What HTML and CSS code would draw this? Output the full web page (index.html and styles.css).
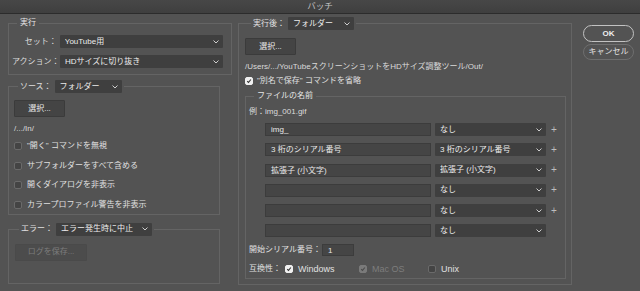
FILE: index.html
```html
<!DOCTYPE html>
<html lang="ja">
<head>
<meta charset="utf-8">
<title>バッチ</title>
<link rel="stylesheet" href="styles.css">
</head>
<body>
<div class="titlebar">バッチ</div>
<div class="main">
  <div class="left">
    <fieldset class="grp g-run">
      <legend class="lg-text">実行</legend>
      <div class="frow">
        <span class="flabel">セット：</span>
        <div class="select s-set"><span>YouTube用</span><svg class="chev" viewBox="0 0 6 4"><path d="M0.5 0.5 L3 3 L5.5 0.5"/></svg></div>
      </div>
      <div class="frow">
        <span class="flabel">アクション：</span>
        <div class="select s-set"><span>HDサイズに切り抜き</span><svg class="chev" viewBox="0 0 6 4"><path d="M0.5 0.5 L3 3 L5.5 0.5"/></svg></div>
      </div>
    </fieldset>

    <fieldset class="grp g-src">
      <legend class="lg-sel"><span class="lg-label">ソース：</span><div class="select s-src"><span>フォルダー</span><svg class="chev" viewBox="0 0 6 4"><path d="M0.5 0.5 L3 3 L5.5 0.5"/></svg></div></legend>
      <div class="btn b-sel">選択...</div>
      <div class="path">/.../In/</div>
      <div class="checks">
        <div class="chk"><span class="box"></span><span>"開く" コマンドを無視</span></div>
        <div class="chk"><span class="box"></span><span>サブフォルダーをすべて含める</span></div>
        <div class="chk"><span class="box"></span><span>開くダイアログを非表示</span></div>
        <div class="chk"><span class="box"></span><span>カラープロファイル警告を非表示</span></div>
      </div>
    </fieldset>

    <fieldset class="grp g-err">
      <legend class="lg-sel"><span class="lg-label">エラー：</span><div class="select s-err"><span>エラー発生時に中止</span><svg class="chev" viewBox="0 0 6 4"><path d="M0.5 0.5 L3 3 L5.5 0.5"/></svg></div></legend>
      <div class="btn b-log disabled">ログを保存...</div>
    </fieldset>
  </div>

  <fieldset class="grp g-dest">
    <legend class="lg-sel"><span class="lg-label">実行後：</span><div class="select s-dest"><span>フォルダー</span><svg class="chev" viewBox="0 0 6 4"><path d="M0.5 0.5 L3 3 L5.5 0.5"/></svg></div></legend>
    <div class="btn b-sel2">選択...</div>
    <div class="path p-out">/Users/.../YouTubeスクリーンショットをHDサイズ調整ツール/Out/</div>
    <div class="chk c-save"><span class="box on"><svg viewBox="0 0 8 8"><path d="M1.6 4.2 L3.3 5.9 L6.5 2"/></svg></span><span>"別名で保存" コマンドを省略</span></div>

    <fieldset class="grp g-name">
      <legend class="lg-text">ファイルの名前</legend>
      <div class="example">例：img_001.gif</div>
      <div class="rows">
        <div class="nrow"><div class="input">img_</div><div class="select s-part"><span>なし</span><svg class="chev" viewBox="0 0 6 4"><path d="M0.5 0.5 L3 3 L5.5 0.5"/></svg></div><span class="plus">+</span></div>
        <div class="nrow"><div class="input">3 桁のシリアル番号</div><div class="select s-part"><span>3 桁のシリアル番号</span><svg class="chev" viewBox="0 0 6 4"><path d="M0.5 0.5 L3 3 L5.5 0.5"/></svg></div><span class="plus">+</span></div>
        <div class="nrow"><div class="input">拡張子 (小文字)</div><div class="select s-part"><span>拡張子 (小文字)</span><svg class="chev" viewBox="0 0 6 4"><path d="M0.5 0.5 L3 3 L5.5 0.5"/></svg></div><span class="plus">+</span></div>
        <div class="nrow"><div class="input"></div><div class="select s-part"><span>なし</span><svg class="chev" viewBox="0 0 6 4"><path d="M0.5 0.5 L3 3 L5.5 0.5"/></svg></div><span class="plus">+</span></div>
        <div class="nrow"><div class="input"></div><div class="select s-part"><span>なし</span><svg class="chev" viewBox="0 0 6 4"><path d="M0.5 0.5 L3 3 L5.5 0.5"/></svg></div><span class="plus">+</span></div>
        <div class="nrow"><div class="input"></div><div class="select s-part"><span>なし</span><svg class="chev" viewBox="0 0 6 4"><path d="M0.5 0.5 L3 3 L5.5 0.5"/></svg></div></div>
      </div>
      <div class="serial"><span>開始シリアル番号：</span><div class="input i-serial">1</div></div>
      <div class="compat">
        <span class="c-label">互換性：</span>
        <div class="chk c-win"><span class="box white"><svg viewBox="0 0 8 8"><path d="M1.6 4.2 L3.3 5.9 L6.5 2"/></svg></span><span class="latin">Windows</span></div>
        <div class="chk c-mac dis"><span class="box grey"><svg viewBox="0 0 8 8"><path d="M1.6 4.2 L3.3 5.9 L6.5 2"/></svg></span><span class="latin">Mac OS</span></div>
        <div class="chk c-unix"><span class="box"></span><span class="latin">Unix</span></div>
      </div>
    </fieldset>
  </fieldset>

  <div class="actions">
    <div class="pill ok">OK</div>
    <div class="pill cancel">キャンセル</div>
  </div>
</div>
</body>
</html>
```

FILE: styles.css
```css
* { box-sizing: border-box; }
html, body {
  margin: 0;
  padding: 0;
  width: 640px;
  height: 291px;
  overflow: hidden;
  background: #535353;
  color: #e0e0e0;
  font-family: "Liberation Sans", "Noto Sans CJK JP", sans-serif;
  font-size: 8px;
  line-height: 12px;
}
.titlebar {
  height: 14px;
  background: linear-gradient(#474747, #3f3f3f);
  border-bottom: 1px solid #2c2c2c;
  color: #c2c2c2;
  text-align: center;
  font-size: 8.5px;
  line-height: 13px;
}
.main {
  display: flex;
  align-items: flex-start;
  padding: 3px 0 0 8px;
}
.left {
  width: 224px;
  display: flex;
  flex-direction: column;
}
.grp {
  margin: 0;
  min-width: 0;
  border: 1px solid #646464;
  padding: 0;
}
.lg-text {
  padding: 0 3px;
  margin-left: 5px;
  line-height: 12px;
  height: 12px;
  color: #e6e6e6;
}
.lg-sel {
  display: flex;
  align-items: center;
  padding: 0 2px;
  height: 13px;
}
.lg-label { color: #e0e0e0; margin-right: 3px; }

.select {
  height: 13px;
  background: #3f3f3f;
  border-radius: 1px;
  display: flex;
  align-items: center;
  justify-content: space-between;
  padding: 0 4px 0 5px;
  color: #ececec;
}
.select span { white-space: nowrap; overflow: hidden; }
.chev {
  width: 6px;
  height: 4px;
  flex: none;
  fill: none;
  stroke: #cfcfcf;
  stroke-width: 1;
}

/* 実行 group */
.g-run { width: 224px; padding: 6px 8px 6px 3px; }
.g-run .lg-text { margin-left: 5px; }
.frow { display: flex; align-items: center; margin-bottom: 7px; }
.frow:last-child { margin-bottom: 0; }
.flabel { width: 45px; text-align: right; margin-right: 3px; white-space: nowrap; color: #dcdcdc; }
.s-set { width: 164px; }

/* ソース group */
.g-src { width: 212px; margin-top: 5px; padding: 7px 5px 3px 5px; }
.g-src .lg-sel, .g-err .lg-sel { margin-left: 4px; }
.s-src { width: 67px; }
.btn {
  height: 17px;
  background: #444444;
  border: 1px solid #3b3b3b;
  border-radius: 1px;
  display: flex;
  align-items: center;
  justify-content: center;
  color: #e8e8e8;
}
.b-sel { width: 51px; }
.path { margin-top: 6px; color: #dadada; white-space: nowrap; }
.checks { display: flex; flex-direction: column; gap: 7.5px; margin-top: 5px; }
.chk { display: flex; align-items: center; height: 12px; white-space: nowrap; }
.box {
  width: 8px;
  height: 8px;
  border-radius: 2px;
  background: #444;
  border: 1px solid #6a6a6a;
  margin-right: 5px;
  flex: none;
  display: flex;
}
.box svg { width: 100%; height: 100%; fill: none; stroke-width: 1.4; }
.box.on, .box.white { background: #f0f0f0; border-color: #f0f0f0; }
.box.on svg, .box.white svg { stroke: #333; }
.box.grey { background: #7a7a7a; border-color: #7a7a7a; }
.box.grey svg { stroke: #4a4a4a; }

/* エラー group */
.g-err { width: 212px; margin-top: 8px; padding: 8px 6px 22px 6px; }
.s-err { width: 96px; }
.b-log { width: 72px; }
.btn.disabled { background: #4c4c4c; border-color: #4a4a4a; color: #7c7c7c; }

/* 実行後 group */
.g-dest { width: 334px; margin-left: 6px; padding: 8px 5px 5px 6px; }
.g-dest .lg-sel { margin-left: 6px; }
.s-dest { width: 66px; }
.b-sel2 { width: 51px; }
.p-out { margin-top: 6px; }
.c-save { margin-top: 2px; }
.c-save .box { margin-right: 4px; }

.g-name { width: 321px; margin-top: 3px; padding: 4px 8px 3px 3px; }
.g-name .lg-text { margin-left: 5px; }
.example { color: #dcdcdc; }
.rows { display: flex; flex-direction: column; gap: 7.3px; margin-top: 5px; margin-left: 16px; }
.nrow { display: flex; align-items: center; height: 13px; }
.input {
  height: 13px;
  background: #454545;
  border: 1px solid #3c3c3c;
  padding: 0 5px;
  color: #e8e8e8;
  line-height: 11px;
  white-space: nowrap;
}
.nrow .input { width: 166px; margin-right: 4px; }
.s-part { width: 111px; }
.plus { width: 6px; margin-left: 5px; color: #bdbdbd; font-size: 10px; text-align: center; }
.serial { display: flex; align-items: center; margin-top: 7px; height: 12px; }
.i-serial { width: 32px; height: 12px; margin-left: 1px; }
.compat { display: flex; align-items: center; margin-top: 7px; height: 12px; }
.c-label { margin-right: 4px; }
.c-win { width: 74px; }
.c-mac { width: 69px; }
.latin { font-family: "Liberation Sans", sans-serif; font-size: 9px; }
.dis { color: #7d7d7d; }

/* buttons */
.actions { margin-left: 11px; margin-top: 8px; display: flex; flex-direction: column; gap: 2px; }
.pill {
  width: 51px;
  height: 17px;
  border-radius: 9px;
  display: flex;
  align-items: center;
  justify-content: center;
  color: #eeeeee;
  font-weight: bold;
}
.ok { border: 1px solid #c2c2c2; }
.cancel { border: 1px solid #6e6e6e; font-weight: normal; color: #e2e2e2; height: 16px; }
```
